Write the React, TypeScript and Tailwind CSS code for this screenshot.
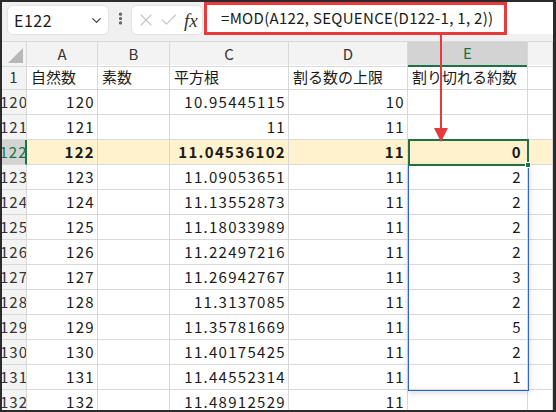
import { X, Check, ChevronDown, EllipsisVertical } from 'lucide-react';

type Row = { n: string; a: string; b: string; c: string; d: string; e: string; bold?: boolean };

const rows: Row[] = [
  { n: '1', a: '自然数', b: '素数', c: '平方根', d: '割る数の上限', e: '割り切れる約数' },
  { n: '120', a: '120', b: '', c: '10.95445115', d: '10', e: '' },
  { n: '121', a: '121', b: '', c: '11', d: '11', e: '' },
  { n: '122', a: '122', b: '', c: '11.04536102', d: '11', e: '0', bold: true },
  { n: '123', a: '123', b: '', c: '11.09053651', d: '11', e: '2' },
  { n: '124', a: '124', b: '', c: '11.13552873', d: '11', e: '2' },
  { n: '125', a: '125', b: '', c: '11.18033989', d: '11', e: '2' },
  { n: '126', a: '126', b: '', c: '11.22497216', d: '11', e: '2' },
  { n: '127', a: '127', b: '', c: '11.26942767', d: '11', e: '3' },
  { n: '128', a: '128', b: '', c: '11.3137085', d: '11', e: '2' },
  { n: '129', a: '129', b: '', c: '11.35781669', d: '11', e: '5' },
  { n: '130', a: '130', b: '', c: '11.40175425', d: '11', e: '2' },
  { n: '131', a: '131', b: '', c: '11.44552314', d: '11', e: '1' },
  { n: '132', a: '132', b: '', c: '11.48912529', d: '11', e: '' },
];

const cols = 'grid grid-cols-[25px_71px_72px_119px_119px_120px_1fr]';
const cell = 'border-r border-b border-[#d9d9d9] flex items-center overflow-hidden whitespace-nowrap';

export default function App() {
  return (
    <div
      className="relative w-[556px] h-[412px] overflow-hidden border-l-2 border-t-2 border-b-2 border-r-[3px] border-[#2b2b2b] bg-white text-[15px] text-[#1a1a1a]"
      style={{ fontFamily: '"Noto Sans CJK JP", "Noto Sans", sans-serif' }}
    >
      {/* Toolbar */}
      <div className="h-[39px] bg-[#f0f0f0] flex items-start pl-[5px]">
        <div className="mt-[3px] w-[102px] h-[30px] bg-white rounded-md border border-[#e2e2e2] flex items-center justify-between pl-[6px] pr-[4px]">
          <span className="text-[16px] tracking-[0.5px]">E122</span>
          <ChevronDown size={15} strokeWidth={2} className="text-[#444]" />
        </div>
        <div className="w-[22px] h-[33px] flex items-center justify-center">
          <EllipsisVertical size={15} strokeWidth={3} className="text-[#555]" />
        </div>
        <div className="mt-[3px] w-[72px] h-[30px] bg-white rounded-md border border-[#e2e2e2] flex items-center pl-[4px] gap-[3px]">
          <X size={20} strokeWidth={1.3} className="text-[#c4c4c4]" />
          <Check size={20} strokeWidth={1.3} className="text-[#c4c4c4]" />
          <span
            className="ml-[2px] italic text-[19px] text-[#333] leading-none"
            style={{ fontFamily: '"Liberation Serif", serif' }}
          >
            fx
          </span>
        </div>
        <div className="ml-[1px] flex-1 h-[32px] bg-white">
          <div className="w-[303px] h-[33px] border-[3px] border-[#e8393d] flex items-center pl-[14px] tracking-[0.3px]">
            =MOD(A122, SEQUENCE(D122-1, 1, 2))
          </div>
        </div>
      </div>

      {/* Grid */}
      <div className="relative">
        <div className={`${cols} h-[24px] bg-[#f3f3f3] border-t border-[#d9d9d9]`}>
          <div className={`${cell} relative`}>
            <div className="absolute right-[3px] bottom-[3px] w-0 h-0 border-l-[15px] border-l-transparent border-b-[15px] border-b-[#b8b8b8]" />
          </div>
          {['A', 'B', 'C', 'D'].map((c) => (
            <div key={c} className={`${cell} justify-center text-[#333]`}>
              {c}
            </div>
          ))}
          <div className="border-r border-[#d9d9d9] border-b-2 border-b-[#1e7145] bg-[#d3d3d3] text-[#1e7145] flex items-center justify-center">
            E
          </div>
          <div className={cell} />
        </div>

        {rows.map((r) => {
          const sel = r.n === '122';
          const bg = sel ? 'bg-[#fff2cc]' : '';
          const wt = r.bold ? 'font-bold' : '';
          const isHead = r.n === '1';
          const al = isHead ? 'justify-start pl-[4px]' : 'justify-end pr-[2px] tracking-[1.3px]';
          return (
            <div key={r.n} className={`${cols} h-[25px]`}>
              <div
                className={
                  sel
                    ? 'border-b border-[#d9d9d9] border-r-2 border-r-[#1e7145] bg-[#d3d3d3] text-[#1e7145] flex items-center justify-center overflow-hidden tracking-[1px]'
                    : `${cell} justify-center bg-[#f3f3f3] text-[#333] tracking-[1px]`
                }
              >
                {r.n}
              </div>
              <div className={`${cell} ${al} ${bg} ${wt}`}>{r.a}</div>
              <div className={`${cell} ${al} ${bg} ${wt}`}>{r.b}</div>
              <div className={`${cell} ${al} ${bg} ${wt}`}>{r.c}</div>
              <div className={`${cell} ${al} ${bg} ${wt}`}>{r.d}</div>
              <div className={`${cell} ${al} ${bg} ${wt} pr-[5px]`}>{r.e}</div>
              <div className={`${cell} ${bg}`} />
            </div>
          );
        })}

        {/* spill range */}
        <div className="absolute left-[406px] top-[123px] w-[121px] h-[227px] border border-[#2f64cc] shadow-[0_2px_6px_rgba(0,0,0,0.15)]" />
        {/* active cell */}
        <div className="absolute left-[406px] top-[98px] w-[121px] h-[27px] border-2 border-[#1e7145]">
          <div className="absolute -right-[4px] -bottom-[4px] w-[6px] h-[6px] bg-[#1e7145] border border-white" />
        </div>
      </div>

      {/* annotation arrow */}
      <div className="absolute left-[438px] top-[33px] w-[2px] h-[94px] bg-[#e8393d]" />
      <div className="absolute left-[432px] top-[126px] w-0 h-0 border-l-[7px] border-r-[7px] border-l-transparent border-r-transparent border-t-[14px] border-t-[#e8393d]" />
    </div>
  );
}
